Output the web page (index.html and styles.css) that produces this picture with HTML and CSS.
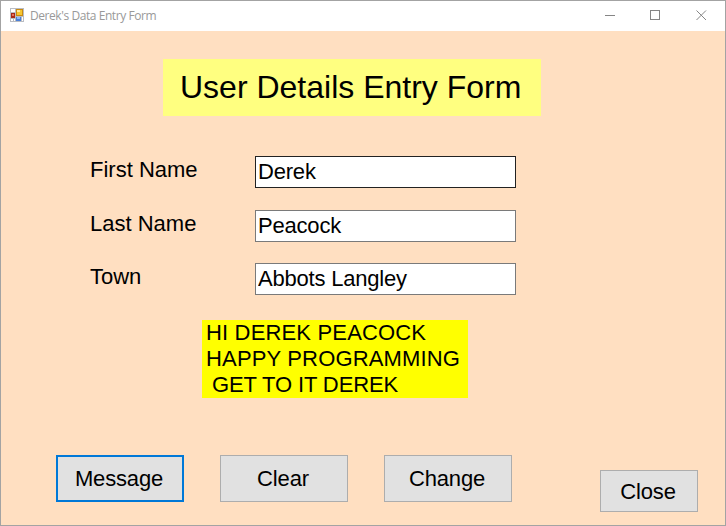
FILE: index.html
```html
<!DOCTYPE html>
<html lang="en">
<head>
<meta charset="utf-8">
<title>Derek's Data Entry Form</title>
<link rel="stylesheet" href="styles.css">
</head>
<body>
<div class="window">
  <header class="titlebar">
    <svg class="app-icon" width="14" height="14" viewBox="0 0 14 14" shape-rendering="crispEdges">
      <path fill="#b9bcc2" d="M0 0h14v14H0z"/>
      <path fill="#fff" d="M1 1h4v3H1zM1 11h2v2H1zM4 11h1v2H4zM12 9h1v4h-1z"/>
      <path fill="#a82a18" d="M1 5h4v5H1z"/><path fill="#e8705a" d="M2 6h2v2H2z"/>
      <path fill="#c98a10" d="M6 1h7v7H6z"/><path fill="#f6c630" d="M7 2h5v5H7z"/><path fill="#ffe89a" d="M7 2h3v2H7z"/>
      <path fill="#4a7fd8" d="M6 9h5v4H6z"/><path fill="#8fb8f5" d="M7 9h3v2H7z"/>
    </svg>
    <span class="caption">Derek's Data Entry Form</span>
    <svg class="controls" width="102" height="11" viewBox="0 0 102 11" fill="none" stroke="#858585">
      <path d="M0 5.5h10M45.5.5h9v9h-9z" shape-rendering="crispEdges"/>
      <path d="M91.5.5l9.5 9.5M101 .5L91.5 10"/>
    </svg>
  </header>
  <main class="form">
    <h1 class="heading">User Details Entry Form</h1>
    <div class="fields">
      <label class="row"><span class="label">First Name</span><input class="field active" value="Derek"></label>
      <label class="row"><span class="label">Last Name</span><input class="field" value="Peacock"></label>
      <label class="row town"><span class="label">Town</span><input class="field" value="Abbots Langley"></label>
    </div>
    <div class="message"><span class="wide">HI DEREK PEACOCK
HAPPY PROGRAMMING</span>
<span class="narrow"> GET TO IT DEREK</span></div>
    <div class="actions">
      <button class="btn primary">Message</button>
      <button class="btn">Clear</button>
      <button class="btn">Change</button>
      <button class="btn close">Close</button>
    </div>
  </main>
</div>
</body>
</html>
```
FILE: styles.css
```css
* { box-sizing: border-box; }
body { margin: 0; font: 22px/26px "Liberation Sans", Arial, sans-serif; color: #000; }
.window {
  width: 726px; height: 526px;
  border: 1px solid #a3a3a3;
  background: #ffdfc1;
  overflow: hidden;
}
.titlebar {
  display: flex; align-items: center;
  height: 30px; padding: 0 18px 0 9px;
  background: #fff;
}
.app-icon { flex: none; margin-top: -2px; }
.caption {
  margin-left: 6px;
  font: 12px/16px "Open Sans", "Noto Sans", sans-serif;
  letter-spacing: -0.43px;
  color: #999;
}
.controls { margin: -1px 0 0 auto; }
.form { display: flex; flex-direction: column; align-items: flex-start; }
.heading {
  width: 378px; height: 57px;
  margin: 28px 0 0 162px; padding-left: 17px;
  font-size: 32px; font-weight: 400; line-height: 57px;
  background: #ffff80;
  white-space: nowrap;
}
.fields { display: grid; row-gap: 22px; margin: 40px 0 0 89px; }
.row { display: flex; height: 32px; }
.town { margin-top: -1px; }
.label { width: 165px; padding-top: 1px; }
.field {
  width: 261px; height: 32px; padding: 0 2px;
  border: 1px solid #7a7a7a;
  background: #fff;
  font: inherit; color: inherit; outline: none;
  letter-spacing: -0.2px;
}
.active { border-color: #222; }
.message {
  width: 266px; height: 78px;
  margin: 25px 0 0 201px; padding-left: 4px;
  background: #ff0;
  white-space: pre;
}
.wide { letter-spacing: 0.16px; }
.narrow { letter-spacing: -0.12px; }
.actions { display: flex; gap: 36px; margin: 57px 0 0 55px; }
.btn {
  width: 128px; height: 47px; padding: 0 2px 0 0;
  border: 1px solid #adadad;
  background: #e1e1e1;
  font: inherit; color: inherit;
  letter-spacing: -0.15px;
}
.primary { border: 2px solid #0078d7; }
.close { width: 98px; height: 42px; margin: 15px 0 0 52px; padding-top: 2px; }
```
